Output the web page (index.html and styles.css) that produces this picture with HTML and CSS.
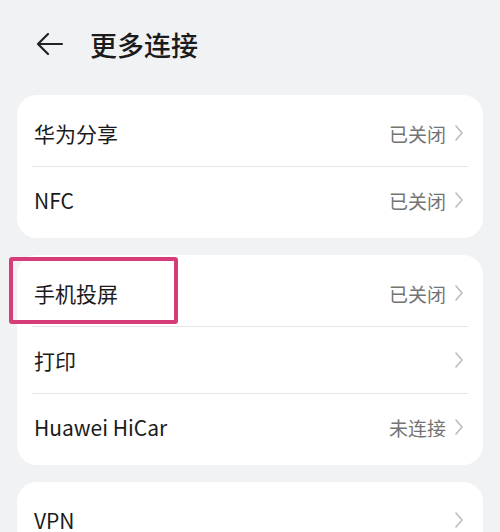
FILE: index.html
```html
<!DOCTYPE html>
<html lang="zh-CN">
<head>
    <meta charset="UTF-8">
    <meta name="viewport" content="width=device-width, initial-scale=1.0">
    <title>更多连接</title>
    <link rel="stylesheet" href="styles.css">
</head>
<body>
    <header class="top-bar">
        <svg class="back-icon" width="28" height="22" viewBox="0 0 28 22">
            <path d="M2 11 H26 M12 1 L2 11 L12 21" fill="none" stroke="#222" stroke-width="2.2" stroke-linecap="round" stroke-linejoin="round"/>
        </svg>
        <h1 class="title">更多连接</h1>
    </header>
    <main class="settings">
        <section class="card">
            <div class="row">
                <span class="label">华为分享</span>
                <span class="status">已关闭</span>
                <svg class="chevron" width="10" height="18" viewBox="0 0 10 18"><path d="M2 2 L8 9 L2 16" fill="none" stroke="#bcbcbc" stroke-width="1.6" stroke-linecap="round" stroke-linejoin="round"/></svg>
            </div>
            <div class="row">
                <span class="label">NFC</span>
                <span class="status">已关闭</span>
                <svg class="chevron" width="10" height="18" viewBox="0 0 10 18"><path d="M2 2 L8 9 L2 16" fill="none" stroke="#bcbcbc" stroke-width="1.6" stroke-linecap="round" stroke-linejoin="round"/></svg>
            </div>
        </section>
        <section class="card">
            <div class="row">
                <span class="label">手机投屏</span>
                <span class="status">已关闭</span>
                <svg class="chevron" width="10" height="18" viewBox="0 0 10 18"><path d="M2 2 L8 9 L2 16" fill="none" stroke="#bcbcbc" stroke-width="1.6" stroke-linecap="round" stroke-linejoin="round"/></svg>
                <!-- highlight marker drawn over the row -->
                <div class="highlight"></div>
            </div>
            <div class="row">
                <span class="label">打印</span>
                <span class="status"></span>
                <svg class="chevron" width="10" height="18" viewBox="0 0 10 18"><path d="M2 2 L8 9 L2 16" fill="none" stroke="#bcbcbc" stroke-width="1.6" stroke-linecap="round" stroke-linejoin="round"/></svg>
            </div>
            <div class="row">
                <span class="label">Huawei HiCar</span>
                <span class="status">未连接</span>
                <svg class="chevron" width="10" height="18" viewBox="0 0 10 18"><path d="M2 2 L8 9 L2 16" fill="none" stroke="#bcbcbc" stroke-width="1.6" stroke-linecap="round" stroke-linejoin="round"/></svg>
            </div>
        </section>
        <section class="card">
            <div class="row">
                <span class="label">VPN</span>
                <span class="status"></span>
                <svg class="chevron" width="10" height="18" viewBox="0 0 10 18"><path d="M2 2 L8 9 L2 16" fill="none" stroke="#bcbcbc" stroke-width="1.6" stroke-linecap="round" stroke-linejoin="round"/></svg>
            </div>
        </section>
    </main>
</body>
</html>
```

FILE: styles.css
```css
body {
    margin: 0;
    padding: 0;
    background-color: #f1f2f4;
    font-family: "Noto Sans CJK SC", "Noto Sans", sans-serif;
    color: #1b1b1b;
    overflow: hidden;
}
.top-bar {
    height: 88px;
    display: flex;
    align-items: center;
    padding-left: 36px;
}
.back-icon {
    display: block;
}
.title {
    margin: 0 0 0 26px;
    font-size: 27px;
    font-weight: 500;
    line-height: 1;
}
.settings {
    padding: 7px 17px 0;
    display: flex;
    flex-direction: column;
    gap: 17px;
}
.card {
    background: #fff;
    border-radius: 20px;
    padding: 5px 0;
}
.row {
    position: relative;
    height: 66px;
    display: flex;
    align-items: center;
    padding: 0 19px 0 17px;
}
.row + .row {
    margin-top: 1px;
}
.row + .row::after {
    content: "";
    position: absolute;
    top: -1px;
    left: 15px;
    right: 15px;
    height: 1px;
    background: #e4e5e7;
}
.label {
    flex: 1;
    font-size: 21px;
    line-height: 1;
}
.status {
    font-size: 19px;
    line-height: 1;
    color: #747474;
    margin-right: 8px;
}
.chevron {
    display: block;
}
.highlight {
    position: absolute;
    left: -8px;
    top: -3px;
    width: 161px;
    height: 59px;
    border: 4px solid #d63c78;
    border-radius: 3px;
}
```
